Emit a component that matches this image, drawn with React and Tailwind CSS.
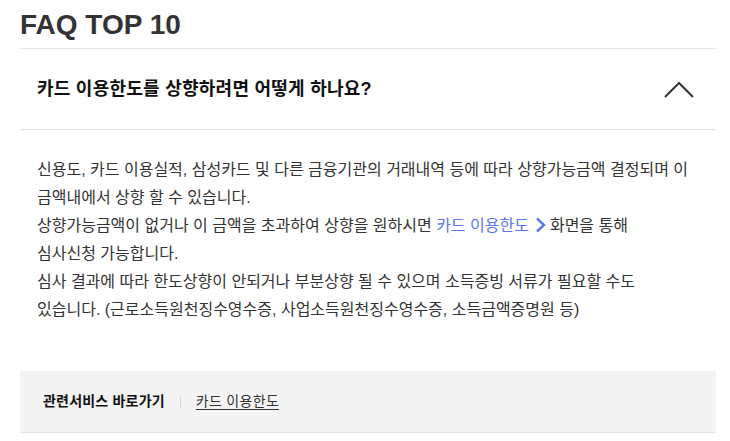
import React from "react";

const font = { fontFamily: '"Liberation Sans", "Noto Sans CJK KR", sans-serif' };

export default function App() {
  return (
    <div className="w-[730px] h-[441px] bg-white pl-[20px] pr-[14px] text-[#333]" style={font}>
      <h1 className="pt-[11px] h-[39px] text-[28px] leading-[28px] font-bold text-[#333]">
        FAQ TOP 10
      </h1>
      <div className="mt-[9px] border-t border-[#e6e6e6]">
        <div className="flex h-[81px] items-center justify-between border-b border-[#e0e0e0] pl-[17px] pr-[22px]">
          <span className="text-[18px] font-bold text-[#111] tracking-[0.25px]">
            카드 이용한도를 상향하려면 어떻게 하나요?
          </span>
          <svg width="30" height="17" viewBox="0 0 30 17" fill="none">
            <path d="M1 16 L15 2 L29 16" stroke="#333" strokeWidth="2" />
          </svg>
        </div>
        <div className="pl-[17px] pt-[26px] text-[16px] leading-[28px] text-[#333]">
          <p>
            신용도, 카드 이용실적, 삼성카드 및 다른 금융기관의 거래내역 등에 따라 상향가능금액 결정되며 이
            <br />
            금액내에서 상향 할 수 있습니다.
          </p>
          <p>
            상향가능금액이 없거나 이 금액을 초과하여 상향을 원하시면{" "}
            <span className="text-[#5a78ee]">카드 이용한도</span>
            <svg className="inline-block align-[-2px] ml-[5px] mr-[3px]" width="13" height="16" viewBox="0 0 13 16" fill="none">
              <path d="M3 1.5 L10 8 L3 14.5" stroke="#5a78ee" strokeWidth="2.4" />
            </svg>
            화면을 통해
            <br />
            심사신청 가능합니다.
          </p>
          <p>
            심사 결과에 따라 한도상향이 안되거나 부분상향 될 수 있으며 소득증빙 서류가 필요할 수도
            <br />
            있습니다. (근로소득원천징수영수증, 사업소득원천징수영수증, 소득금액증명원 등)
          </p>
        </div>
        <div className="mt-[47px] flex h-[62px] items-center bg-[#f3f3f3] border-b border-[#e4e4e4] pl-[23px] text-[14px]">
          <span className="font-bold text-[#111] tracking-[0.2px]">관련서비스 바로가기</span>
          <span className="mx-[15px] h-[12px] w-px bg-[#d6d6d6]" />
          <a className="underline underline-offset-[3px] text-[#333] tracking-[0.3px]">카드 이용한도</a>
        </div>
      </div>
    </div>
  );
}
